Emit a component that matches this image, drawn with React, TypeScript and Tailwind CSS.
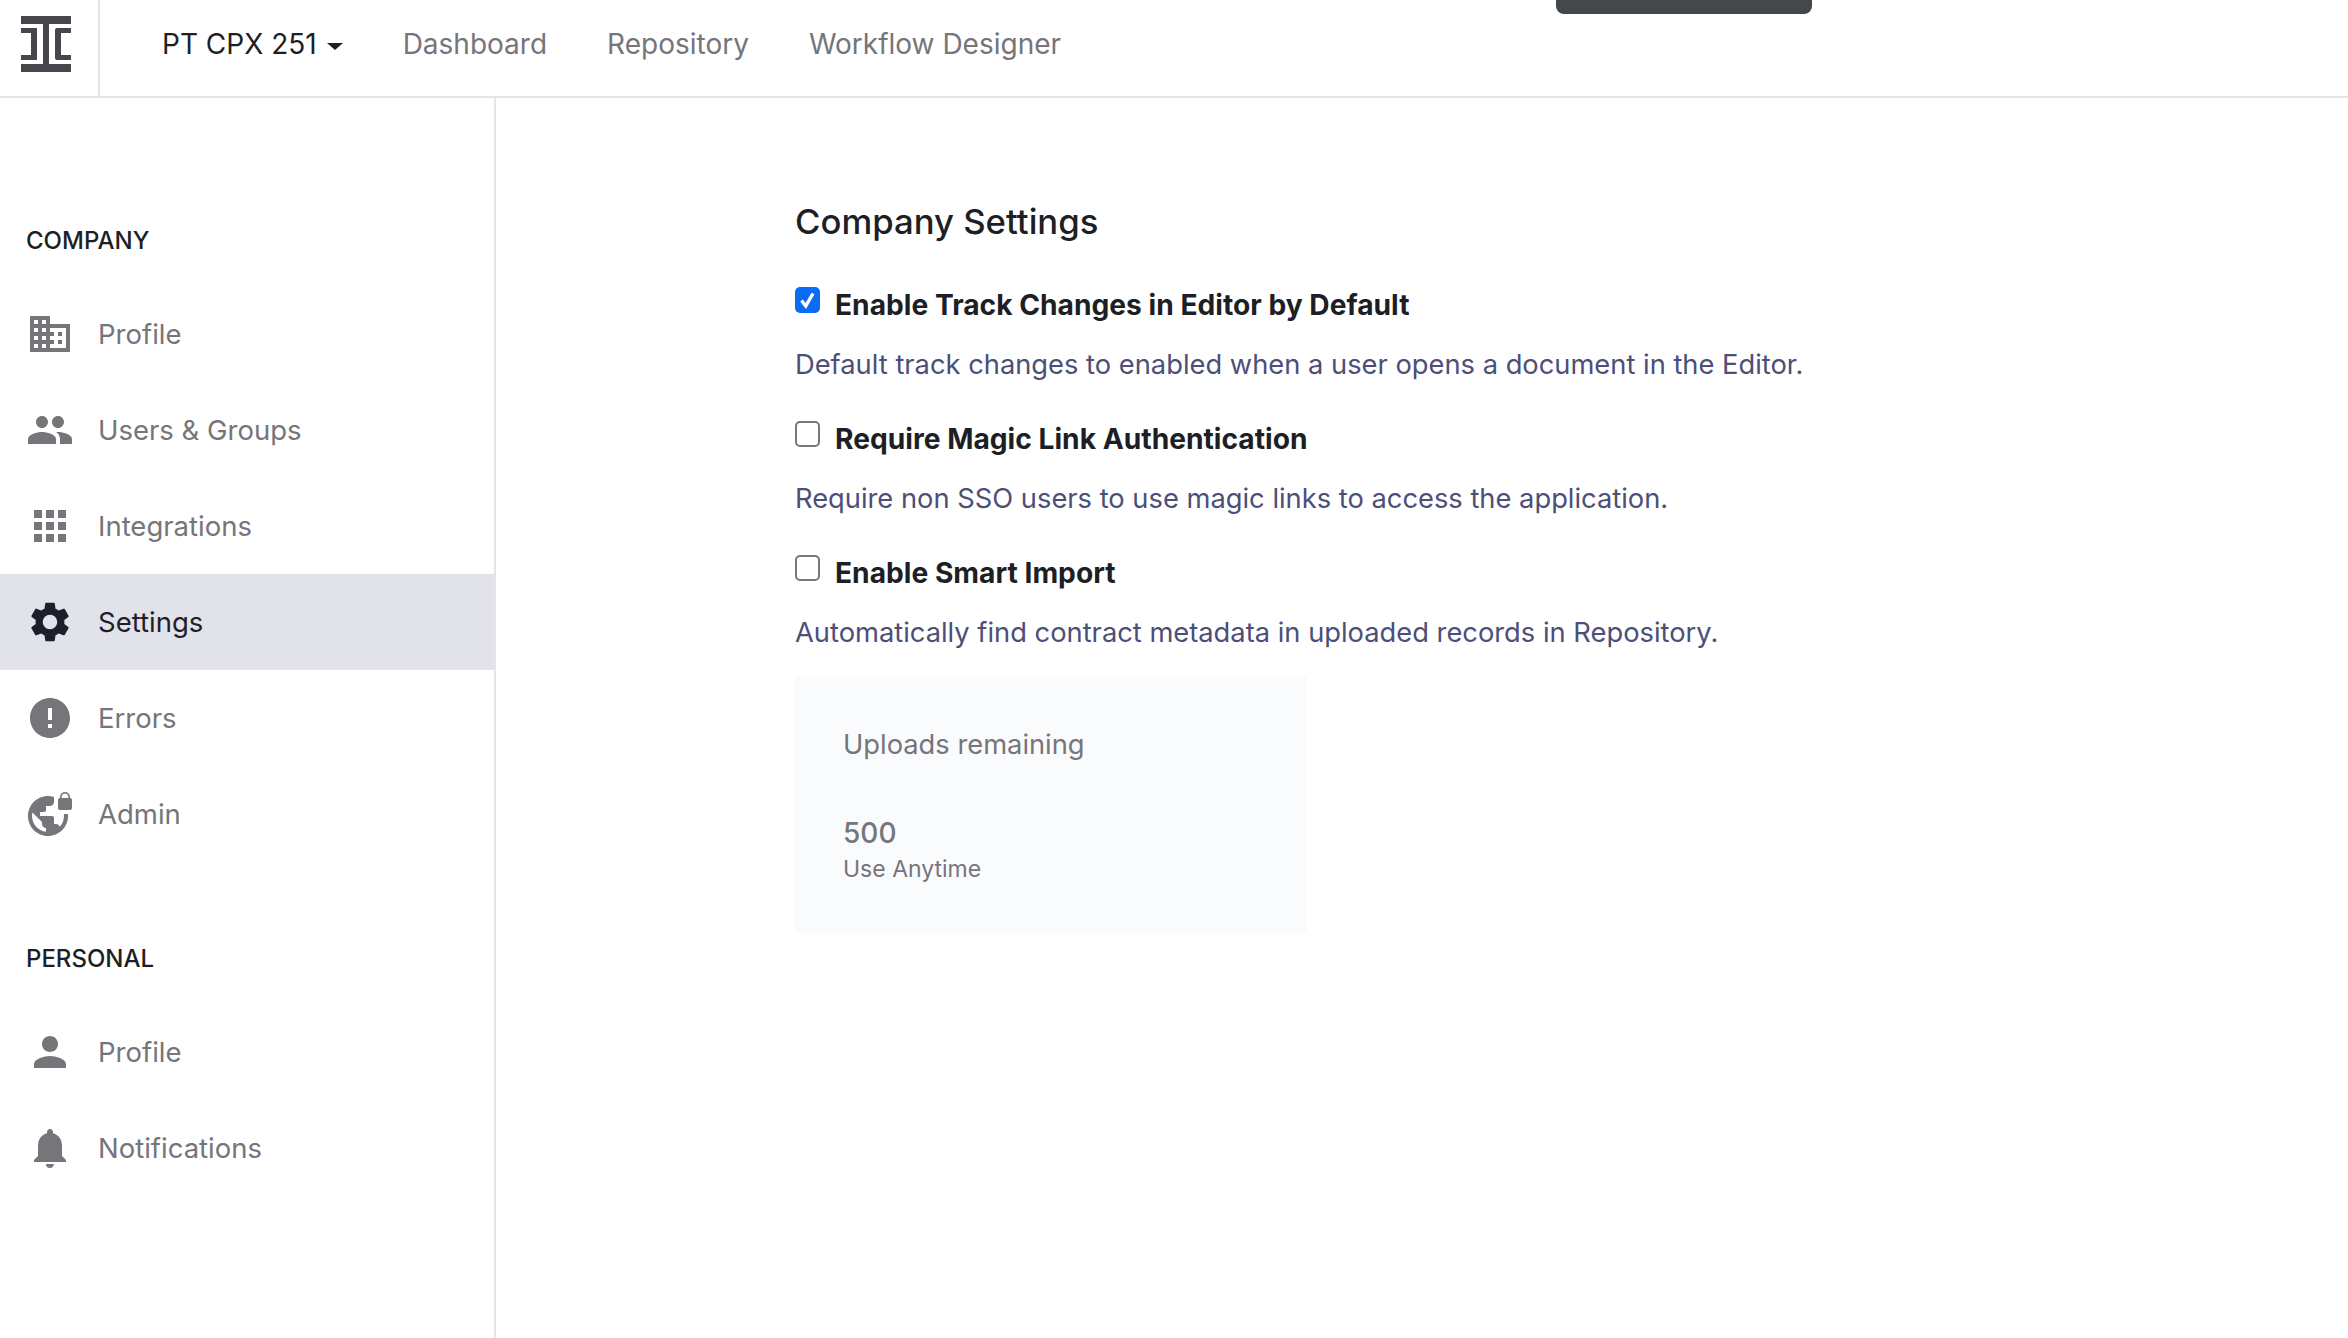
import React from "react";
import {
  MdApps,
  MdDomain,
  MdError,
  MdNotifications,
  MdPeople,
  MdPerson,
  MdSettings,
  MdVpnLock,
} from "react-icons/md";

const companyItems = [
  { label: "Profile", icon: MdDomain },
  { label: "Users & Groups", icon: MdPeople },
  { label: "Integrations", icon: MdApps },
  { label: "Settings", icon: MdSettings, active: true },
  { label: "Errors", icon: MdError },
  { label: "Admin", icon: MdVpnLock },
];

const personalItems = [
  { label: "Profile", icon: MdPerson },
  { label: "Notifications", icon: MdNotifications },
];

const settings = [
  {
    title: "Enable Track Changes in Editor by Default",
    text: "Default track changes to enabled when a user opens a document in the Editor.",
    checked: true,
  },
  {
    title: "Require Magic Link Authentication",
    text: "Require non SSO users to use magic links to access the application.",
    checked: false,
  },
  {
    title: "Enable Smart Import",
    text: "Automatically find contract metadata in uploaded records in Repository.",
    checked: false,
  },
];

const Logo = () => (
  <svg width="50" height="56" viewBox="0 0 50 56" fill="#45474c">
    <rect x="0" y="0" width="50" height="8" />
    <rect x="0" y="48" width="50" height="8" />
    <rect x="22" y="8" width="6" height="40" />
    <path d="M0 12h16v32H0v-5h10V17H0z" />
    <path d="M50 12H36a2 2 0 0 0-2 2v28a2 2 0 0 0 2 2h14v-5H40V17h10z" />
  </svg>
);

const NavRow = ({ item }: { item: { label: string; icon: any; active?: boolean } }) => {
  const Icon = item.icon;
  return (
    <div
      className={
        item.active
          ? "flex h-[96px] items-center gap-[24px] bg-[#e2e2ea] pl-[26px] text-[#1e1e2a]"
          : "flex h-[96px] items-center gap-[24px] pl-[26px] text-[#75757a]"
      }
    >
      <Icon size={48} />
      <span className="pt-[2px] text-[27.5px]">{item.label}</span>
    </div>
  );
};

const Checkbox = ({ checked }: { checked: boolean }) =>
  checked ? (
    <div className="flex h-[26px] w-[25px] shrink-0 items-center justify-center rounded-[5px] bg-[#0a6cf2]">
      <svg width="17" height="18" viewBox="0 0 17 18" fill="none" stroke="#fff" strokeWidth="3.4">
        <path d="M2.5 9.5 6.8 15 14 2.5" />
      </svg>
    </div>
  ) : (
    <div className="h-[26px] w-[25px] shrink-0 rounded-[5px] border-2 border-[#77777b] bg-white" />
  );

export default function App() {
  return (
    <div className="relative flex h-screen flex-col overflow-hidden bg-white font-['Inter',sans-serif]">
      <div className="absolute top-0 left-[1556px] h-[14px] w-[256px] rounded-b-[8px] bg-[#45484b]" />

      <header className="flex h-[98px] shrink-0 items-stretch border-b-2 border-[#e5e5e5]">
        <div className="flex w-[100px] shrink-0 items-start border-r-2 border-[#e5e5e5] pt-[16px] pl-[21px]">
          <Logo />
        </div>
        <nav className="flex items-center gap-[60px] pb-[8px] pl-[62px] text-[28px] text-[#75757a]">
          <div className="flex items-center gap-[10px] text-[#1e1f24]">
            <span>PT CPX 251</span>
            <div className="mt-[4px] h-0 w-0 border-x-[8px] border-t-[7px] border-x-transparent border-t-[#1e1f24]" />
          </div>
          <span>Dashboard</span>
          <span>Repository</span>
          <span>Workflow Designer</span>
        </nav>
      </header>

      <div className="flex min-h-0 flex-1">
        <aside className="w-[496px] shrink-0 border-r-2 border-[#e5e5e5]">
          <div className="mt-[123px] mb-[25px] flex h-[40px] items-center pl-[26px] text-[24px] font-medium text-[#1e1f24]">
            COMPANY
          </div>
          {companyItems.map((item) => (
            <NavRow key={item.label} item={item} />
          ))}
          <div className="mt-[77px] mb-[25px] flex h-[40px] items-center pl-[26px] text-[24px] font-medium text-[#1e1f24]">
            PERSONAL
          </div>
          {personalItems.map((item) => (
            <NavRow key={item.label} item={item} />
          ))}
        </aside>

        <main className="flex-1 pt-[100px] pl-[299px]">
          <h1 className="h-[46px] text-[34.7px] leading-[46px] font-medium text-[#1e1f24]">Company Settings</h1>
          <div className="mt-[41px] flex flex-col gap-[34px]">
            {settings.map((s) => (
              <div key={s.title}>
                <div className="flex h-[40px] items-start gap-[15px]">
                  <div className="pt-[2px]">
                    <Checkbox checked={s.checked} />
                  </div>
                  <span className="text-[28.2px] leading-[40px] font-bold text-[#1e1f24]">{s.title}</span>
                </div>
                <p className="mt-[20px] h-[40px] text-[27.3px] leading-[40px] text-[#4c4f78]">{s.text}</p>
              </div>
            ))}
          </div>
          <div className="mt-[24px] h-[256px] w-[512px] bg-[#fafbfd] pt-[48px] pl-[48px] text-[#75757a]">
            <div className="h-[40px] text-[27.3px] leading-[40px]">Uploads remaining</div>
            <div className="mt-[48px] h-[40px] text-[28px] leading-[40px] font-medium">500</div>
            <div className="text-[23px] leading-[32px]">Use Anytime</div>
          </div>
        </main>
      </div>
    </div>
  );
}
